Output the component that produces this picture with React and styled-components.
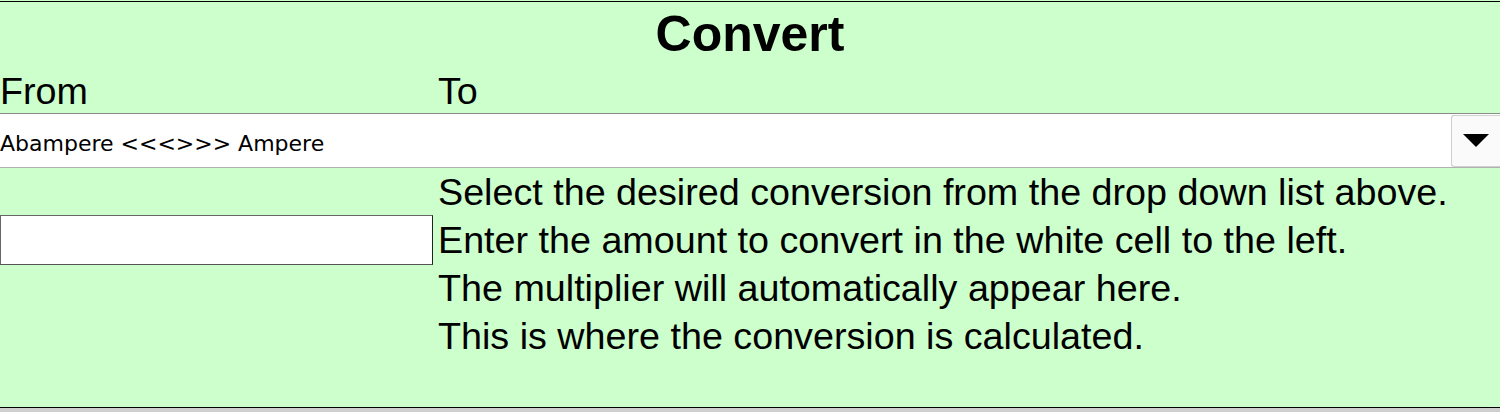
import React, { useState } from 'react';
import styled, { createGlobalStyle } from 'styled-components';

const GlobalStyle = createGlobalStyle`
  html {
    background: #cfcfcf;
  }
  body {
    margin: 0;
    font-family: "Liberation Sans", Arial, sans-serif;
    color: #000;
  }
`;

const Page = styled.div`
  background: #ccffcc;
  padding-top: 1px;
`;

const Frame = styled.div`
  border-top: 1px solid #000;
  border-bottom: 1px solid #000;
  height: 405px;
  box-sizing: content-box;
  display: grid;
  grid-template-columns: 438px 1fr;
  grid-template-rows: 68px 43px 55px 1fr;
`;

const Title = styled.h1`
  grid-column: 1 / -1;
  margin: 0;
  padding-top: 4px;
  text-align: center;
  font-size: 50px;
  line-height: 57.5px;
  font-weight: bold;
`;

const Label = styled.div`
  font-size: 37.7px;
  line-height: 42px;
`;

const SelectBox = styled.div`
  grid-column: 1 / -1;
  display: flex;
  background: #fff;
  border-top: 1px solid #8a8a8a;
  border-bottom: 1px solid #b0b0b0;
`;

const Select = styled.select`
  flex: 1;
  appearance: none;
  border: none;
  outline: none;
  background: transparent;
  margin: 0;
  padding: 5px 0 0 0;
  font-family: "DejaVu Sans", "Noto Sans", sans-serif;
  font-size: 22px;
  color: #000;
`;

const ArrowButton = styled.div`
  width: 48px;
  margin: 1px 0 0 0;
  display: flex;
  align-items: center;
  justify-content: center;
  background: #fafafa;
  border: 1px solid #cfcfcf;
  border-right: none;
  border-radius: 3px 0 0 3px;
`;

const InputCell = styled.div`
  padding-top: 47px;
`;

const Amount = styled.input`
  display: block;
  box-sizing: border-box;
  width: 433px;
  height: 50px;
  margin: 0;
  border: 1px solid #666;
  border-right-color: #222;
  border-bottom-color: #555;
  background: #fff;
  font-family: "Liberation Sans", Arial, sans-serif;
  font-size: 30px;
  outline: none;
`;

const Hints = styled.div`
  font-size: 37.7px;
  line-height: 48px;
`;

const conversions = ['Abampere <<<>>> Ampere', 'Ampere <<<>>> Abampere'];

export default function App() {
  const [choice, setChoice] = useState(conversions[0]);
  const [amount, setAmount] = useState('');

  return (
    <>
      <GlobalStyle />
      <Page>
        <Frame>
          <Title>Convert</Title>
          <Label>From</Label>
          <Label>To</Label>
          <SelectBox>
            <Select value={choice} onChange={(e) => setChoice(e.target.value)}>
              {conversions.map((c) => (
                <option key={c}>{c}</option>
              ))}
            </Select>
            <ArrowButton>
              <svg width="26" height="14" viewBox="0 0 26 14">
                <path d="M0 0 L26 0 L13 13 Z" fill="#000" />
              </svg>
            </ArrowButton>
          </SelectBox>
          <InputCell>
            <Amount value={amount} onChange={(e) => setAmount(e.target.value)} />
          </InputCell>
          <Hints>
            <div>Select the desired conversion from the drop down list above.</div>
            <div>Enter the amount to convert in the white cell to the left.</div>
            <div>The multiplier will automatically appear here.</div>
            <div>This is where the conversion is calculated.</div>
          </Hints>
        </Frame>
      </Page>
    </>
  );
}
